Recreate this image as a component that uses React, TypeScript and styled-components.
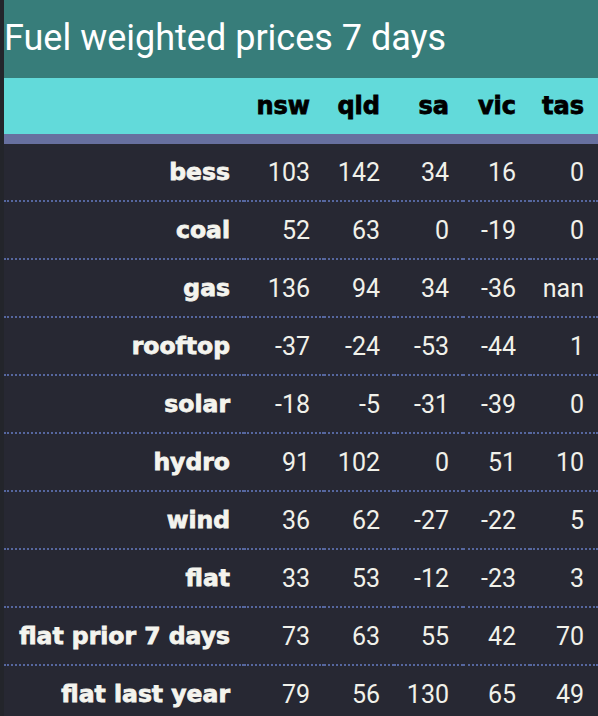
import styled, { createGlobalStyle } from "styled-components";

const GlobalStyle = createGlobalStyle`
  html, body {
    margin: 0;
    padding: 0;
    background: #23252b;
  }
  body {
    font-family: Roboto, "Liberation Sans", sans-serif;
  }
`;

const Panel = styled.div`
  margin-left: 4px;
  min-height: 100vh;
  background: #272833;
`;

const Title = styled.h1`
  margin: 0;
  height: 78px;
  box-sizing: border-box;
  padding: 17px 0 0 0;
  background: #377d7a;
  color: #ffffff;
  font-family: Roboto, "Liberation Sans", sans-serif;
  font-weight: 400;
  font-size: 36px;
  line-height: 42px;
  white-space: nowrap;
`;

const Table = styled.table`
  width: 594px;
  border-collapse: collapse;
  table-layout: fixed;
`;

const HeadRow = styled.tr`
  background: #62dada;
  border-bottom: 10px solid #67709f;
`;

const HeadCell = styled.th`
  height: 56px;
  padding: 0 14px 0 0;
  text-align: right;
  color: #000000;
  font-family: "DejaVu Sans", Roboto, sans-serif;
  font-weight: 700;
  font-size: 24px;
  -webkit-text-stroke: 0.8px #000000;
`;

const BodyRow = styled.tr`
  border-bottom: 2px dotted #56679f;
  &:last-child {
    border-bottom: none;
  }
`;

const LabelCell = styled.th`
  height: 56px;
  padding: 0 14px 0 0;
  text-align: right;
  color: #f4f4ee;
  font-family: "DejaVu Sans", Roboto, sans-serif;
  font-weight: 700;
  font-size: 23.5px;
  -webkit-text-stroke: 0.8px #f4f4ee;
  white-space: nowrap;
`;

const ValueCell = styled.td`
  height: 56px;
  padding: 0 14px 0 0;
  text-align: right;
  color: #f1f1ea;
  font-size: 25px;
  font-weight: 400;
`;

const regions = ["nsw", "qld", "sa", "vic", "tas"];
const widths = [240, 80, 70, 69, 67, 68];

const rows: [string, (number | string)[]][] = [
  ["bess", [103, 142, 34, 16, 0]],
  ["coal", [52, 63, 0, -19, 0]],
  ["gas", [136, 94, 34, -36, "nan"]],
  ["rooftop", [-37, -24, -53, -44, 1]],
  ["solar", [-18, -5, -31, -39, 0]],
  ["hydro", [91, 102, 0, 51, 10]],
  ["wind", [36, 62, -27, -22, 5]],
  ["flat", [33, 53, -12, -23, 3]],
  ["flat prior 7 days", [73, 63, 55, 42, 70]],
  ["flat last year", [79, 56, 130, 65, 49]],
];

const App = () => {
  return (
    <>
      <GlobalStyle />
      <Panel>
        <Title>Fuel weighted prices 7 days</Title>
        <Table>
          <colgroup>
            {widths.map((w, i) => (
              <col key={i} style={{ width: w }} />
            ))}
          </colgroup>
          <thead>
            <HeadRow>
              <HeadCell />
              {regions.map((r) => (
                <HeadCell key={r}>{r}</HeadCell>
              ))}
            </HeadRow>
          </thead>
          <tbody>
            {rows.map(([label, values]) => (
              <BodyRow key={label}>
                <LabelCell>{label}</LabelCell>
                {values.map((v, i) => (
                  <ValueCell key={i}>{v}</ValueCell>
                ))}
              </BodyRow>
            ))}
          </tbody>
        </Table>
      </Panel>
    </>
  );
};

export default App;
